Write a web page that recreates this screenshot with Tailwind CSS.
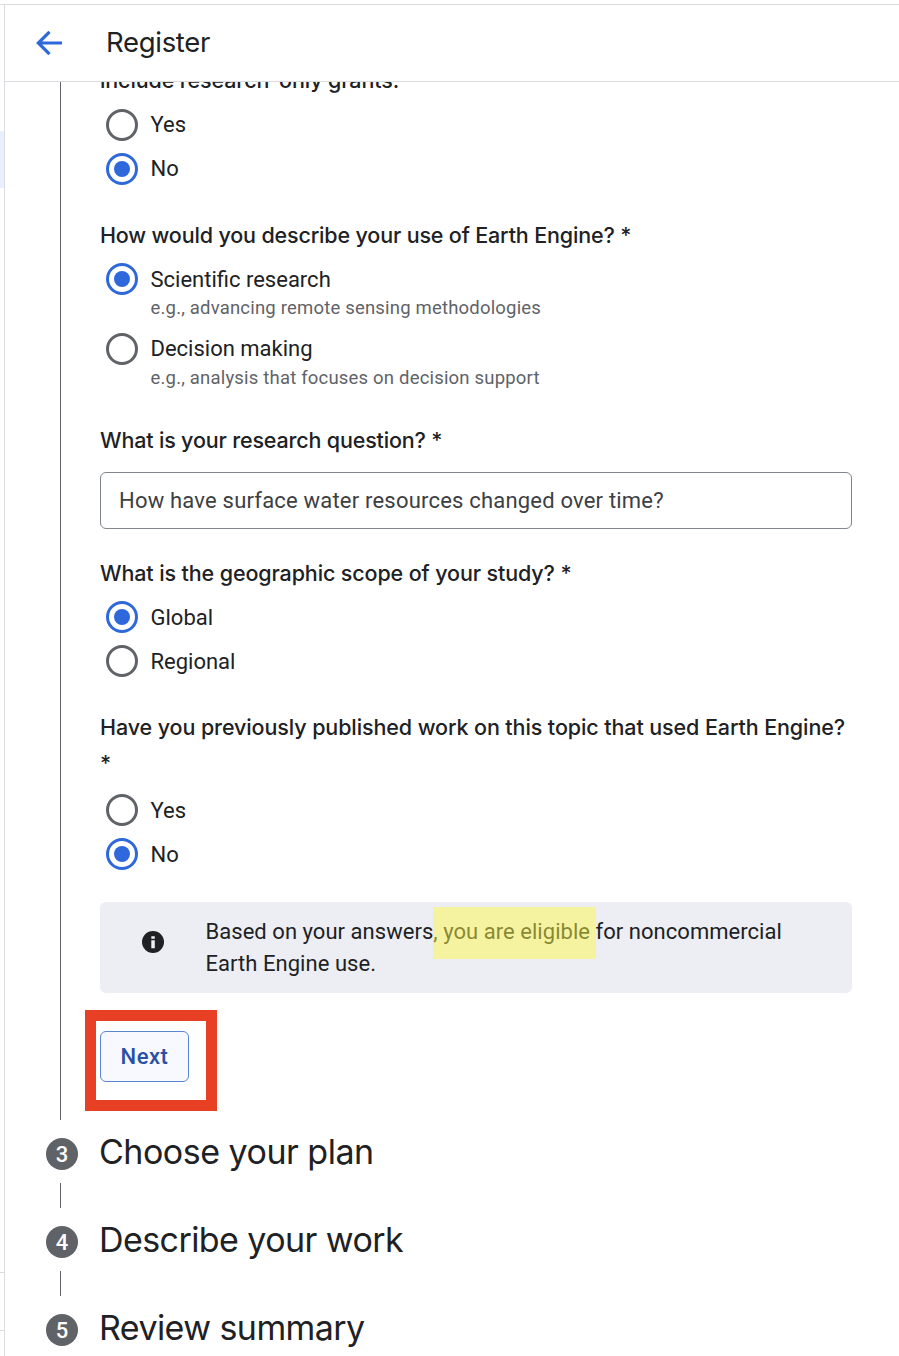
<!DOCTYPE html>
<html lang="en">
<head>
<meta charset="utf-8">
<title>Register</title>
<script src="https://cdn.jsdelivr.net/npm/@tailwindcss/browser@4"></script>
</head>
<body class="h-[1356px] overflow-hidden bg-white pt-1 font-['Roboto',sans-serif] text-[22px] text-[#202124]">
<div class="flex h-[1352px] border-t border-[#dadce0]">
  <aside class="flex w-[5px] shrink-0 flex-col border-r border-[#dadce0]">
    <div class="mt-[126px] h-[57px] bg-[#e8f0fe]"></div>
    <div class="mt-[1084px] h-[59px] border-y border-[#dadce0]"></div>
  </aside>
  <div class="flex min-w-0 grow flex-col">
    <header class="flex h-[77px] shrink-0 items-center border-b border-[#dadce0]">
      <svg class="ml-[31px] h-[26px] w-[26px]" viewBox="0 0 26 26" fill="none" stroke="#2f68da" stroke-width="3.2"><path d="M26 13H2.5M13.5 1.8 2.3 13 13.5 24.2"/></svg>
      <h1 class="ml-11 font-['Inter'] text-[27.5px] tracking-[-0.3px]">Register</h1>
    </header>
    <main class="min-h-0 grow overflow-hidden">
      <section class="ml-[55px] flow-root h-[1038px] border-l border-[#5f6368] pl-[39px]">
        <div class="w-[752px]">
          <h2 class="-mt-5 h-9 font-['Inter'] text-[21.5px] leading-9 font-medium tracking-[-0.12px]">include research-only grants.</h2>
          <div class="mt-[5px]">
            <label class="flex h-11 items-center gap-[12.5px] pl-1.5"><span class="size-8 rounded-full border-[3px] border-[#5f6368]"></span><span class="-mt-0.5">Yes</span></label>
            <label class="flex h-11 items-center gap-[12.5px] pl-1.5"><span class="flex size-8 items-center justify-center rounded-full border-[3px] border-[#2f68da]"><span class="size-4 rounded-full bg-[#2f68da]"></span></span><span class="-mt-0.5">No</span></label>
          </div>
          <h2 class="mt-[26px] font-['Inter'] text-[21.5px] leading-9 font-medium tracking-[-0.16px]">How would you describe your use of Earth Engine? *</h2>
          <div class="mt-1">
            <div class="h-[70px]">
              <label class="flex h-11 items-center gap-[12.5px] pl-1.5"><span class="flex size-8 items-center justify-center rounded-full border-[3px] border-[#2f68da]"><span class="size-4 rounded-full bg-[#2f68da]"></span></span><span>Scientific research</span></label>
              <p class="-mt-1 pl-[50.5px] text-[18.5px] leading-[22px] tracking-[0.19px] text-[#5f6368]">e.g., advancing remote sensing methodologies</p>
            </div>
            <div class="h-[70px]">
              <label class="flex h-11 items-center gap-[12.5px] pl-1.5"><span class="size-8 rounded-full border-[3px] border-[#5f6368]"></span><span class="-mt-0.5">Decision making</span></label>
              <p class="-mt-1 pl-[50.5px] text-[18.5px] leading-[22px] tracking-[0.19px] text-[#5f6368]">e.g., analysis that focuses on decision support</p>
            </div>
          </div>
          <h2 class="mt-[25px] font-['Inter'] text-[21.5px] leading-9 font-medium tracking-[-0.17px]">What is your research question? *</h2>
          <div class="mt-3.5 flex h-[57px] items-center rounded-md border border-[#80868b] pl-[18px] tracking-[0.2px] text-[#3c4043]">How have surface water resources changed over time?</div>
          <h2 class="mt-[26px] font-['Inter'] text-[21.5px] leading-9 font-medium tracking-[-0.12px]">What is the geographic scope of your study? *</h2>
          <div class="mt-1">
            <label class="flex h-11 items-center gap-[12.5px] pl-1.5"><span class="flex size-8 items-center justify-center rounded-full border-[3px] border-[#2f68da]"><span class="size-4 rounded-full bg-[#2f68da]"></span></span><span>Global</span></label>
            <label class="flex h-11 items-center gap-[12.5px] pl-1.5"><span class="size-8 rounded-full border-[3px] border-[#5f6368]"></span><span>Regional</span></label>
          </div>
          <h2 class="mt-[26px] font-['Inter'] text-[21.5px] leading-9 font-medium tracking-[-0.1px] whitespace-nowrap">Have you previously published work on this topic that used Earth Engine?<br>*</h2>
          <div class="mt-[7px]">
            <label class="flex h-11 items-center gap-[12.5px] pl-1.5"><span class="size-8 rounded-full border-[3px] border-[#5f6368]"></span><span>Yes</span></label>
            <label class="flex h-11 items-center gap-[12.5px] pl-1.5"><span class="flex size-8 items-center justify-center rounded-full border-[3px] border-[#2f68da]"><span class="size-4 rounded-full bg-[#2f68da]"></span></span><span>No</span></label>
          </div>
          <div class="relative mt-[26px] flex h-[91px] rounded-md bg-[#edeef3] pl-[42px]">
            <svg class="mt-[29px] size-[22px]" viewBox="0 0 22 22"><circle cx="11" cy="11" r="11" fill="#202124"/><path d="M9.3 5.2h3.5v2.5H9.3zM9.3 9.2h3.5v8H9.3z" fill="#edeef3"/></svg>
            <p class="mt-3.5 ml-[41.5px] leading-8 tracking-[0.04px]">Based on your answers, you are eligible for noncommercial<br>Earth Engine use.</p>
            <div class="absolute top-[5px] left-[333px] h-[52px] w-[163px] bg-[#fdf846]/48"></div>
          </div>
          <div class="relative mt-[38px] w-[89px]">
            <button class="block h-[51px] w-[89px] rounded-md border border-[#5b85cf] bg-[#f8f9ff] font-medium tracking-[0.5px] text-[#2950a5]">Next</button>
            <div class="absolute top-[-21px] left-[-15px] h-[101px] w-[131.5px] border-[11px] border-[#e84025]"></div>
          </div>
        </div>
      </section>
      <div class="mt-[18px] flex h-8 items-center pl-[41px]"><span class="flex size-8 items-center justify-center rounded-full bg-[#5f6368] font-medium text-white">3</span><h2 class="-mt-1.5 ml-[21px] font-['Inter'] text-[34px] tracking-[-0.5px]">Choose your plan</h2></div>
      <div class="mt-[13px] ml-[55px] h-[25px] w-px bg-[#5f6368]"></div>
      <div class="mt-[18px] flex h-8 items-center pl-[41px]"><span class="flex size-8 items-center justify-center rounded-full bg-[#5f6368] font-medium text-white">4</span><h2 class="-mt-1.5 ml-[21px] font-['Inter'] text-[34px] tracking-[-0.57px]">Describe your work</h2></div>
      <div class="mt-[13px] ml-[55px] h-[25px] w-px bg-[#5f6368]"></div>
      <div class="mt-[18px] flex h-8 items-center pl-[41px]"><span class="flex size-8 items-center justify-center rounded-full bg-[#5f6368] font-medium text-white">5</span><h2 class="-mt-1.5 ml-[21px] font-['Inter'] text-[34px] tracking-[-0.57px]">Review summary</h2></div>
    </main>
  </div>
</div>
</body>
</html>
